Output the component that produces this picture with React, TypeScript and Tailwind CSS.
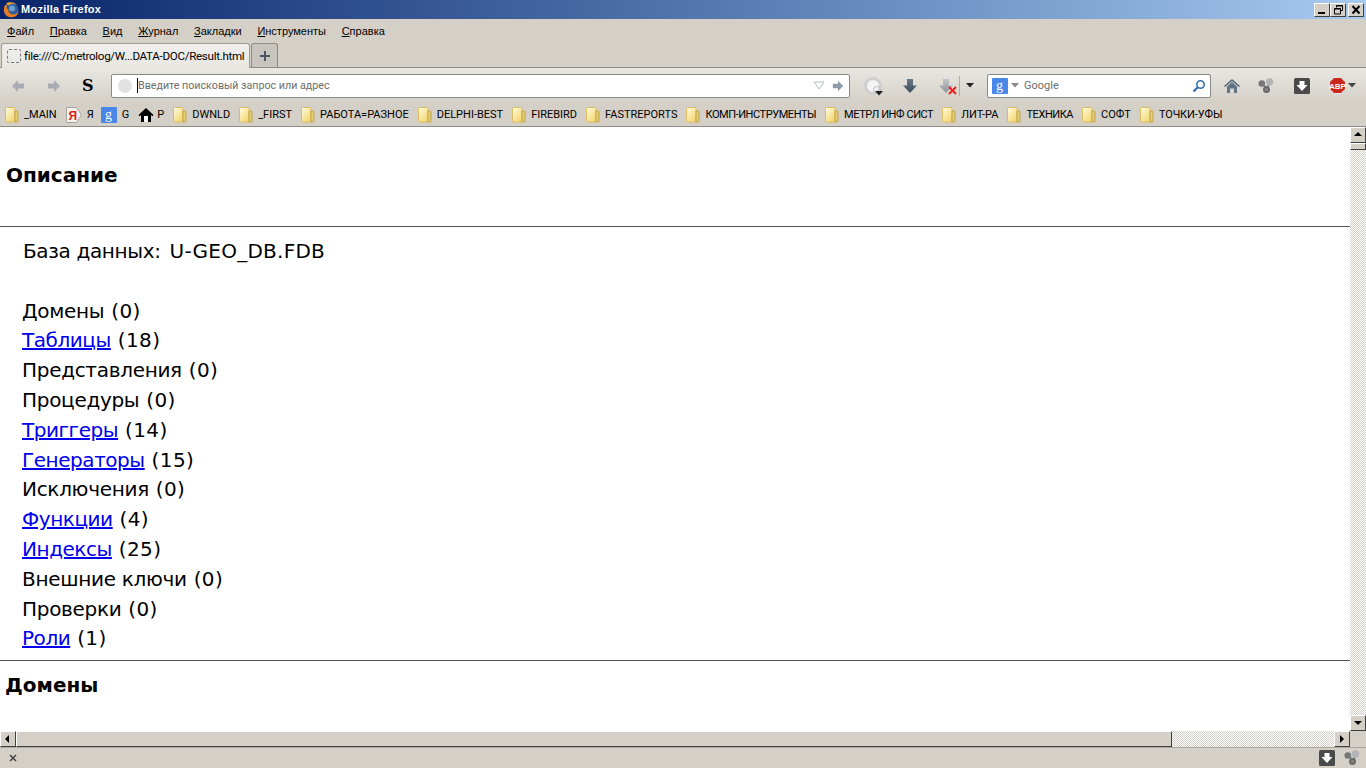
const uiFont = "font-['Liberation_Sans',sans-serif]"

function FolderIcon() {
  return (
    <svg width="16" height="16" viewBox="0 0 16 16" className="shrink-0">
      <defs>
        <linearGradient id="fold" x1="0" y1="0" x2="0.700" y2="1">
          <stop offset="0" stopColor="#fffbe0" />
          <stop offset="1" stopColor="#f4d873" />
        </linearGradient>
      </defs>
      <path d="M.5 1.500q0-1 1-1h7.500q1 0 1 1v13.500h-8.500q-1 0-1-1z" fill="url(#fold)" stroke="#d8bd62" />
      <path d="M10 4h2.500q.5 0 .5 .5v10q0 .5-.5 .5h-2.500z" fill="#e8cd6e" stroke="#c2a550" />
    </svg>
  )
}

function YandexIcon() {
  return (
    <svg width="16" height="16" viewBox="0 0 16 16" className="shrink-0">
      <path d="M.5 .5h10l5 7.500-5 7.500h-10z" fill="#f4f2ee" stroke="#a8a49c" />
      <text x="2.500" y="12.500" fontSize="12" fontWeight="bold" fill="#e0201b" fontFamily="Liberation Sans">Я</text>
    </svg>
  )
}

function GoogleIcon() {
  return (
    <svg width="16" height="16" viewBox="0 0 16 16" className="shrink-0">
      <rect width="16" height="16" rx="1" fill="#4a86e8" />
      <text x="4" y="11.500" fontSize="14" fill="#fff" fontFamily="Liberation Serif">g</text>
    </svg>
  )
}

function BlackHome() {
  return (
    <svg width="16" height="16" viewBox="0 0 16 16" className="shrink-0">
      <path d="M8 1L.5 8l1.200 1.200L3 8v7h10V8l1.300 1.200L15.500 8z" fill="#000" />
      <rect x="6" y="9" width="4" height="6" fill="#fff" />
    </svg>
  )
}

function Firefox() {
  return (
    <svg width="16" height="16" viewBox="0 0 16 16" className="shrink-0">
      <circle cx="8" cy="8" r="7.500" fill="#2f5f9f" />
      <circle cx="9" cy="6.500" r="3" fill="#6f9fd0" />
      <path d="M2 3C.3 6 .5 10 3 13c3 3 8 3 11 0 1-1.200 1.500-2.500 1.500-4-1 2.500-3.500 4-6 3.500C6.500 12 5 10 5.500 8 4 7 3 5 4 3 3 3 2.500 3 2 3z" fill="#ee7a1a" />
      <path d="M3 1.500C6 -.5 11-.3 14 3c-2-1.200-4-1.500-6-1-1 .3-1.500 1-2 1.500z" fill="#f6a623" />
    </svg>
  )
}

function WinButton({ kind }: { kind: 'min' | 'max' | 'close' }) {
  return (
    <div className="w-4 h-[14px] bg-[#d4d0c8] border-t border-l border-t-white border-l-white border-r border-b border-r-[#404040] border-b-[#404040] flex items-center justify-center">
      <svg width="11" height="10" viewBox="0 0 11 10">
        {kind === 'min' && <rect x="1" y="7" width="7" height="2" fill="#000" />}
        {kind === 'max' && (
          <path d="M3.500 2.500V.5h6v5h-2M1.500 4v-.5h6v5.500h-6zM3.500 1h6M1.500 4h6" fill="none" stroke="#000" />
        )}
        {kind === 'close' && <path d="M1.500 1l7 7.500M8.500 1l-7 7.500" stroke="#000" strokeWidth="2" />}
      </svg>
    </div>
  )
}

function ScrollBtn({ dir }: { dir: 'up' | 'down' | 'left' | 'right' }) {
  const pts = { up: '1,6 5,2 9,6', down: '1,3 9,3 5,7', left: '6,1 6,9 2,5', right: '3,1 3,9 7,5' }[dir]
  return (
    <div className="w-4 h-4 shrink-0 bg-[#d4d0c8] border-t border-l border-t-white border-l-white border-r border-b border-r-[#404040] border-b-[#404040] flex items-center justify-center">
      <svg width="10" height="10" viewBox="0 0 10 10">
        <polygon points={pts} fill="#000" />
      </svg>
    </div>
  )
}

function ArrowLeft({ color, flip }: { color: string; flip?: boolean }) {
  return (
    <svg width="16" height="14" viewBox="0 0 16 14" className={flip ? 'rotate-180' : ''}>
      <path d="M8 1L2 7l6 6V9.500h6v-5H8z" fill={color} />
    </svg>
  )
}

function DownArrow({ top, bottom, id }: { top: string; bottom: string; id: string }) {
  return (
    <svg width="16" height="16" viewBox="0 0 16 16">
      <defs>
        <linearGradient id={id} x1="0" y1="0" x2="0" y2="1">
          <stop offset="0" stopColor={top} />
          <stop offset="1" stopColor={bottom} />
        </linearGradient>
      </defs>
      <path d="M5 1h6v6.500h4L8 15 1 7.500h4z" fill={`url(#${id})`} />
    </svg>
  )
}

function Caret({ color = '#222' }: { color?: string }) {
  return (
    <svg width="8" height="5" viewBox="0 0 8 5">
      <polygon points="0,0 8,0 4,4.500" fill={color} />
    </svg>
  )
}

function ShareIcon() {
  return (
    <svg width="16" height="16" viewBox="0 0 16 16">
      <path d="M4 5l5 6 3-7" stroke="#8a8a8a" strokeWidth="2" fill="none" />
      <circle cx="3.800" cy="5.500" r="3.300" fill="#777" />
      <circle cx="11.500" cy="4" r="3.700" fill="#b4b4b4" />
      <circle cx="8.500" cy="11.500" r="3.500" fill="#6a6a6a" />
      <circle cx="8.500" cy="11.500" r="1.300" fill="#8c8c8c" />
    </svg>
  )
}

function DarkDownload() {
  return (
    <svg width="16" height="16" viewBox="0 0 16 16">
      <rect width="16" height="16" rx="1.500" fill="#4a4a4a" />
      <path d="M5.500 3h5v4h3L8 13 2.500 7h3z" fill="#fff" />
    </svg>
  )
}

const bookmarks = [
  { label: '_MAIN', icon: 'folder', cls: '' },
  { label: 'Я', icon: 'yandex', cls: 'mr-[-2px]' },
  { label: 'G', icon: 'google', cls: '' },
  { label: 'P', icon: 'home', cls: '' },
  { label: 'DWNLD', icon: 'folder', cls: '' },
  { label: '_FIRST', icon: 'folder', cls: '' },
  { label: 'РАБОТА=РАЗНОЕ', icon: 'folder', cls: '' },
  { label: 'DELPHI-BEST', icon: 'folder', cls: '' },
  { label: 'FIREBIRD', icon: 'folder', cls: '' },
  { label: 'FASTREPORTS', icon: 'folder', cls: '' },
  { label: 'КОМП-ИНСТРУМЕНТЫ', icon: 'folder', cls: 'tracking-[-0.44px]' },
  { label: 'МЕТРЛ ИНФ СИСТ', icon: 'folder', cls: 'tracking-[-0.43px]' },
  { label: 'ЛИТ-РА', icon: 'folder', cls: '' },
  { label: 'ТЕХНИКА', icon: 'folder', cls: 'tracking-[-0.43px]' },
  { label: 'СОФТ', icon: 'folder', cls: '' },
  { label: 'ТОЧКИ-УФЫ', icon: 'folder', cls: 'tracking-[-0.1px]' },
]

const menu = [
  ['Ф', 'айл'],
  ['П', 'равка'],
  ['В', 'ид'],
  ['Ж', 'урнал'],
  ['З', 'акладки'],
  ['И', 'нструменты'],
  ['С', 'правка'],
]

const dbItems: [string, string, boolean][] = [
  ['Домены', '(0)', false],
  ['Таблицы', '(18)', true],
  ['Представления', '(0)', false],
  ['Процедуры', '(0)', false],
  ['Триггеры', '(14)', true],
  ['Генераторы', '(15)', true],
  ['Исключения', '(0)', false],
  ['Функции', '(4)', true],
  ['Индексы', '(25)', true],
  ['Внешние ключи', '(0)', false],
  ['Проверки', '(0)', false],
  ['Роли', '(1)', true],
]

export default function App() {
  const track = 'bg-[repeating-conic-gradient(#d4d0c8_0_25%,#ffffff_0_50%)] bg-[length:2px_2px]'
  return (
    <div className={`w-[1366px] h-[768px] flex flex-col overflow-hidden bg-[#d4d0c8] text-black ${uiFont}`}>
      {/* title bar */}
      <div className="h-[19px] shrink-0 flex items-center pl-[3px] pr-[2px] bg-gradient-to-r from-[#0a246a] to-[#a6caf0]">
        <Firefox />
        <span className="ml-[2px] text-[11px] font-bold tracking-[0.25px] text-white">Mozilla Firefox</span>
        <div className="ml-auto flex">
          <WinButton kind="min" />
          <WinButton kind="max" />
          <div className="ml-[2px]">
            <WinButton kind="close" />
          </div>
        </div>
      </div>

      {/* menu */}
      <div className="h-[24px] shrink-0 flex items-center pl-[7px] gap-[15.7px] text-[11px]">
        {menu.map(([first, rest]) => (
          <span key={first + rest}>
            <span className="underline">{first}</span>
            {rest}
          </span>
        ))}
      </div>

      {/* tabs */}
      <div className="h-[25px] shrink-0 flex items-end pl-[1px] relative">
        <div className="absolute left-0 right-0 bottom-0 h-px bg-[#8f8c86]" />
        <div className="relative h-[25px] w-[249px] bg-gradient-to-b from-[#f0efec] to-[#e8e6e1] border border-b-0 border-[#a09c94] rounded-t-[3px] flex items-center pl-[5px] whitespace-nowrap">
          <div className="w-[14px] h-[14px] shrink-0 border border-dashed border-[#777] rounded-[2px] mr-[3px]" />
          <span className="pt-[2px] text-[11.6px] tracking-[-0.3px] font-['Roboto',sans-serif]">file:///C:/metrolog/W...DATA-DOC/Result.html</span>
        </div>
        <div className="relative ml-[1px] h-[24px] w-[27px] mb-px bg-[#c8c5be] border border-b-0 border-[#8f8c86] rounded-t-[3px] flex items-center justify-center">
          <svg width="12" height="12" viewBox="0 0 12 12">
            <path d="M6 1v10M1 6h10" stroke="#4a5568" strokeWidth="2" />
          </svg>
        </div>
      </div>

      {/* nav bar */}
      <div className="h-[35px] shrink-0 flex items-center bg-gradient-to-b from-[#e9e7e2] to-[#d4d0c8]">
        <div className="w-[110px] flex items-center pl-[10px] gap-[20px]">
          <ArrowLeft color="#a9adb3" />
          <ArrowLeft color="#a9adb3" flip />
          <span className="font-['DejaVu_Serif',serif] text-[16px] font-bold leading-none">S</span>
        </div>
        <div className="ml-[1px] w-[739px] h-[24px] bg-white border border-[#8a8a86] rounded-[2px] flex items-center pl-[6px] pr-[4px]">
          <div className="w-[14px] h-[14px] rounded-full bg-[#e2e2e2]" />
          <div className="ml-[5px] w-px h-[15px] bg-black" />
          <span className="pt-[2px] text-[10.7px] text-[#6d6d6d] font-['Roboto',sans-serif]">Введите поисковый запрос или адрес</span>
          <div className="ml-auto mr-[6px]">
            <svg width="12" height="9" viewBox="0 0 12 9">
              <polygon points="1,1 11,1 6,8" fill="#fff" stroke="#b5bcc4" />
            </svg>
          </div>
          <svg width="14" height="12" viewBox="0 0 16 14" className="rotate-180">
            <path d="M8 1L2 7l6 6V9.500h6v-5H8z" fill="#8d9aa8" />
          </svg>
        </div>
        <div className="ml-[14px] relative w-[18px] h-[18px] rounded-full border-[3px] border-[#cfcfcf] bg-[#f4f4f4]">
          <div className="absolute left-[6px] top-[6px] w-[8px] h-[8px] rounded-full border border-[#bdbdbd]" />
          <div className="absolute right-[-4px] bottom-[-4px]">
            <Caret />
          </div>
        </div>
        <div className="ml-[20px]">
          <DownArrow id="dl" top="#687686" bottom="#3f4c5a" />
        </div>
        <div className="ml-[20px] relative">
          <DownArrow id="dlx" top="#c2c4c8" bottom="#8f959c" />
          <svg width="9" height="9" viewBox="0 0 9 9" className="absolute right-[-3px] bottom-[-1px]">
            <path d="M1 1l7 7M8 1l-7 7" stroke="#f02020" strokeWidth="2" />
          </svg>
        </div>
        <div className="ml-[5px] w-px h-[20px] bg-[#b0aea8]" />
        <div className="ml-[6px]">
          <Caret />
        </div>
        <div className="ml-[13px] w-[224px] h-[24px] bg-white border border-[#8a8a86] rounded-[2px] flex items-center pl-[4px] pr-[4px]">
          <GoogleIcon />
          <div className="ml-[3px]">
            <Caret color="#8a8a8a" />
          </div>
          <span className="ml-[5px] pt-[2px] text-[11px] text-[#6d6d6d] font-['Roboto',sans-serif]">Google</span>
          <svg width="14" height="14" viewBox="0 0 14 14" className="ml-auto">
            <circle cx="8.500" cy="5.500" r="3.700" fill="none" stroke="#2f6ea8" strokeWidth="1.600" />
            <path d="M6 8l-4.500 4.500" stroke="#2f6ea8" strokeWidth="2.200" />
          </svg>
        </div>
        <div className="ml-[13px]">
          <svg width="16" height="16" viewBox="0 0 16 16">
            <path d="M8 1L0 8l1 1 7-6 7 6 1-1z" fill="#4f6273" />
            <path d="M3 8.500L8 4l5 4.500V15h-3v-4.500H6V15H3z" fill="#5f7486" />
          </svg>
        </div>
        <div className="ml-[18px]">
          <ShareIcon />
        </div>
        <div className="ml-[20px]">
          <DarkDownload />
        </div>
        <div className="ml-[19px] flex items-center gap-[2px]">
          <svg width="17" height="17" viewBox="0 0 17 17">
            <polygon points="5,.5 12,.5 16.500,5 16.500,12 12,16.500 5,16.500 .5,12 .5,5" fill="#c8281c" stroke="#e8e8e8" />
            <text x="8.500" y="11.500" textAnchor="middle" fontSize="8" fontWeight="bold" fill="#fff" fontFamily="Liberation Sans">ABP</text>
          </svg>
          <Caret color="#444" />
        </div>
      </div>

      {/* bookmarks */}
      <div className="h-[24px] shrink-0 flex items-center pl-[5px] gap-[9px] text-[11px] font-['Roboto',sans-serif] border-b border-[#8f8c86]">
        {bookmarks.map((b) => (
          <div key={b.label} className={`flex items-center ${b.icon === 'folder' || b.icon === 'home' ? 'gap-[3px]' : 'gap-[5px]'} ${b.cls}`}>
            {b.icon === 'folder' && <FolderIcon />}
            {b.icon === 'yandex' && <YandexIcon />}
            {b.icon === 'google' && <GoogleIcon />}
            {b.icon === 'home' && <BlackHome />}
            <span className="pt-[2px]">{b.label}</span>
          </div>
        ))}
      </div>

      {/* page + vertical scrollbar */}
      <div className="h-[604px] shrink-0 flex">
        <div className="flex-1 bg-white overflow-hidden font-['DejaVu_Sans',sans-serif] text-[20px] leading-[29.8px]">
          <h1 className="pl-[6px] pt-[34px] font-bold text-[20px]">Описание</h1>
          <hr className="mt-[35px] border-t border-[#555]" />
          <div className="pl-[23px] pt-[10px]">
            <span className="tracking-[-0.35px]">База данных:</span>{' '}
            <span className="ml-[2.5px] tracking-[0.25px]">U-GEO_DB.FDB</span>
          </div>
          <div className="pl-[22px] pt-[30px]">
            {dbItems.map(([name, count, link]) => (
              <div key={name}>
                {link ? (
                  <span className="text-[#0000ee] underline tracking-[-0.45px]">{name}</span>
                ) : (
                  <span className="tracking-[-0.3px]">{name}</span>
                )}{' '}
                <span className="ml-[0.5px] tracking-[0.4px]">{count}</span>
              </div>
            ))}
          </div>
          <hr className="mt-[6px] border-t border-[#555]" />
          <h1 className="pl-[5px] pt-[10px] font-bold text-[20px]">Домены</h1>
        </div>
        <div className="w-4 flex flex-col">
          <ScrollBtn dir="up" />
          <div className="h-[7px] shrink-0 bg-[#d4d0c8] border-t border-l border-t-white border-l-white border-r border-b border-r-[#404040] border-b-[#404040]" />
          <div className={`flex-1 ${track}`} />
          <ScrollBtn dir="down" />
        </div>
      </div>

      {/* horizontal scrollbar */}
      <div className="h-[16px] shrink-0 flex">
        <ScrollBtn dir="left" />
        <div className="w-[1156px] bg-[#d4d0c8] border-t border-l border-t-white border-l-white border-r border-b border-r-[#404040] border-b-[#404040]" />
        <div className={`flex-1 ${track}`} />
        <ScrollBtn dir="right" />
        <div className="w-4 bg-[#d4d0c8]" />
      </div>

      {/* status bar */}
      <div className="flex-1 flex items-center border-t border-[#aaa69e] pl-[9px] pr-[6px]">
        <svg width="8" height="8" viewBox="0 0 8 8">
          <path d="M1 1l6 6M7 1l-6 6" stroke="#444" strokeWidth="1.500" />
        </svg>
        <div className="ml-auto flex items-center gap-[9px]">
          <DarkDownload />
          <ShareIcon />
        </div>
      </div>
    </div>
  )
}
